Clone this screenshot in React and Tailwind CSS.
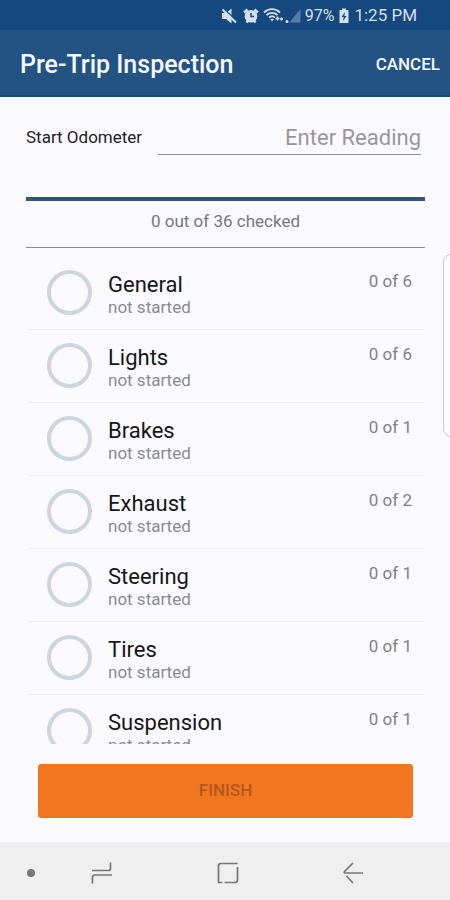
const sections = [
  { name: 'General', total: 6 },
  { name: 'Lights', total: 6 },
  { name: 'Brakes', total: 1 },
  { name: 'Exhaust', total: 2 },
  { name: 'Steering', total: 1 },
  { name: 'Tires', total: 1 },
  { name: 'Suspension', total: 1 },
]

function StatusBar() {
  return (
    <div className="flex h-[30px] shrink-0 items-center justify-end bg-[#14487e] pr-[33px] pt-px text-[17px] text-[#d3e0f0]">
      <svg viewBox="0 0 16 16" className="mr-1.5 h-4 w-4" fill="currentColor">
        <path d="M1 5h4l5.500-4.500v15L5 11H1z" />
        <path d="M3.500 1.500l12 11" stroke="#14487e" strokeWidth="1.500" />
        <path d="M1.500 1.500l13.500 13" stroke="currentColor" strokeWidth="2" />
      </svg>
      <svg viewBox="0 0 16 16" className="mr-1 h-4 w-4" fill="none" stroke="currentColor">
        <path d="M1 4.500L4.500 1.500M15 4.500L11.500 1.500M3.500 14.500l1.500-2M12.500 14.500l-1.500-2" strokeWidth="2.500" />
        <circle cx="8" cy="8.200" r="6.300" fill="currentColor" stroke="none" />
        <path d="M8 5v3.500h3" stroke="#14487e" strokeWidth="1.500" />
      </svg>
      <svg viewBox="0 0 22 17" className="h-[17px] w-[22px]" fill="none" stroke="currentColor" strokeWidth="1.800">
        <path d="M1 5.500c4.500-4.500 11.500-4.500 16 0M3.500 8.200c3.200-3 7.800-3 11 0M6 10.700c1.800-1.700 4.200-1.700 6 0" />
        <path d="M7 12l2 2.500 2-2.500z" fill="currentColor" stroke="none" />
        <path d="M12.500 11.500h4M14.500 9.500v4M17 12h3M18.500 10.500v3" strokeWidth="1.500" />
      </svg>
      <svg viewBox="0 0 16 16" className="mr-1 h-4 w-4" fill="currentColor">
        <circle cx="2" cy="13.500" r="1.500" />
        <path d="M15.500 1v13.500H4.500z" opacity="0.350" />
      </svg>
      <span className="text-[16px]">97%</span>
      <svg viewBox="0 0 12 16" className="mx-1 h-4 w-3" fill="currentColor">
        <path d="M4 0.500h4v1.500h2.500v13h-9v-13H4z" />
        <path d="M7 4L3.500 9h2.200L5 13l3.500-5H6.300z" fill="#14487e" />
      </svg>
      <span>1:25 PM</span>
    </div>
  )
}

function SectionRow({ name, total }) {
  return (
    <li className="ml-0.5 border-b border-[#f0f0f4]">
      <button type="button" className="flex h-[72px] w-full items-start pl-[19px] pr-[13px] pt-[13px] text-left">
        <span className="h-[45px] w-[45px] shrink-0 rounded-full border-4 border-[#cdd5de]" />
        <span className="ml-4 flex-1">
          <span className="mt-1 block text-[22px] leading-[22px] text-[#161616]">{name}</span>
          <span className="block text-[17px] leading-[22px] text-[#8b8b8f]">not started</span>
        </span>
        <span className="text-[17px] leading-[22px] text-[#818185]">0 of {total}</span>
      </button>
    </li>
  )
}

function NavBar() {
  return (
    <nav className="flex h-[58px] shrink-0 items-center bg-[#efefef] pl-[27px] pr-[85px] pt-1 text-[#77777a]">
      <span className="h-2 w-2 rounded-full bg-[#77777a]" />
      <div className="ml-[55px] flex flex-1 items-center justify-between">
        <button type="button" aria-label="Recent apps">
          <svg viewBox="0 0 24 24" className="h-6 w-6" fill="none" stroke="currentColor" strokeWidth="1.700">
            <path d="M2 9.500h16.500q2 0 2-2V1.500M22 14H5q-2.500 0-2.500 2.500v6" />
          </svg>
        </button>
        <button type="button" aria-label="Home">
          <svg viewBox="0 0 24 24" className="h-6 w-6" fill="none" stroke="currentColor" strokeWidth="1.700">
            <path d="M21.500 6v13q0 2.500-2.500 2.500H8.500M6.500 21.500H2.500V5q0-2.500 2.500-2.500h16.500" />
          </svg>
        </button>
        <button type="button" aria-label="Back">
          <svg viewBox="0 0 24 24" className="h-6 w-6" fill="none" stroke="currentColor" strokeWidth="1.700">
            <path d="M12 2L3.500 10.500q-1 1.500 1 1.500h17.500M5.500 15l6.500 7" />
          </svg>
        </button>
      </div>
    </nav>
  )
}

export default function App() {
  return (
    <div className="relative flex h-screen flex-col overflow-hidden bg-[#fafaff] font-['Roboto',sans-serif]">
      <StatusBar />
      <header className="flex h-[67px] shrink-0 items-center justify-between border-b-2 border-[#164880] bg-[#235383] pl-5 pr-[10px] pt-1 font-medium text-[#f4f8ff]">
        <h1 className="text-[25px]">Pre-Trip Inspection</h1>
        <button type="button" className="text-[17px]">CANCEL</button>
      </header>

      <main className="flex min-h-0 flex-1 flex-col pb-6 pl-[26px] pr-[25px]">
        <div className="mt-6 flex items-center pr-1">
          <label htmlFor="odometer" className="text-[17px] text-[#222]">Start Odometer</label>
          <input
            id="odometer"
            type="text"
            inputMode="numeric"
            placeholder="Enter Reading"
            className="ml-4 h-[34px] min-w-0 flex-1 border-b border-[#8e8e92] bg-transparent text-right text-[22px] outline-none placeholder:text-[#97979b]"
          />
        </div>

        <div className="mt-[42px] h-1 shrink-0 bg-[#34537a]" />
        <p className="border-b border-[#8a8a8e] pb-[15px] pt-[9px] text-center text-[17px] leading-[22px] text-[#77777b]">
          0 out of 36 checked
        </p>

        <ul className="mt-[9px] min-h-0 flex-1 overflow-y-auto [scrollbar-width:none]">
          {sections.map((s) => (
            <SectionRow key={s.name} name={s.name} total={s.total} />
          ))}
        </ul>

        <button
          type="button"
          className="mx-3 mt-5 h-[54px] shrink-0 rounded-[3px] bg-[#f27620] text-[17px] font-medium text-[#b2581c]"
        >
          FINISH
        </button>
      </main>

      <NavBar />

      {/* edge panel handle */}
      <div className="absolute -right-2 top-[254px] h-[183px] w-[15px] rounded-l-lg border border-[#c8c8cc] bg-white" />
    </div>
  )
}
